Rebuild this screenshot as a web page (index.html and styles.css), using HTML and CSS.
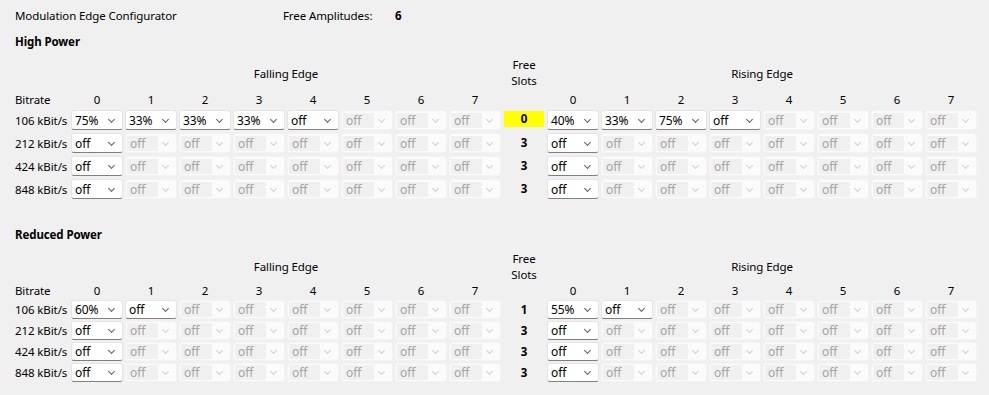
FILE: index.html
```html
<!DOCTYPE html>
<html>
<head>
<meta charset="utf-8">
<link rel="stylesheet" href="styles.css">
</head>
<body>
<div class="top">
  <div class="app-title">Modulation Edge Configurator</div>
  <div class="amp-label">Free Amplitudes:</div>
  <div class="amp-val">6</div>
</div>

<div class="sec-title first">High Power</div>
<div class="grid high">
  <div class="hdr-empty"></div>
  <div class="hdr-group fall">Falling Edge</div>
  <div class="hdr-free">Free<br>Slots</div>
  <div class="hdr-group rise">Rising Edge</div>

  <div class="col-hd">Bitrate</div>
  <div class="num">0</div><div class="num">1</div><div class="num">2</div><div class="num">3</div><div class="num">4</div><div class="num">5</div><div class="num">6</div><div class="num">7</div>
  <div></div>
  <div class="num">0</div><div class="num">1</div><div class="num">2</div><div class="num">3</div><div class="num">4</div><div class="num">5</div><div class="num">6</div><div class="num">7</div>

  <div class="lbl">106 kBit/s</div>
  <div class="cb"><span>75%</span><i></i></div><div class="cb"><span>33%</span><i></i></div><div class="cb"><span>33%</span><i></i></div><div class="cb"><span>33%</span><i></i></div><div class="cb"><span>off</span><i></i></div><div class="cb dis"><span>off</span><i></i></div><div class="cb dis"><span>off</span><i></i></div><div class="cb dis"><span>off</span><i></i></div>
  <div class="free"><span class="warn">0</span></div>
  <div class="cb"><span>40%</span><i></i></div><div class="cb"><span>33%</span><i></i></div><div class="cb"><span>75%</span><i></i></div><div class="cb"><span>off</span><i></i></div><div class="cb dis"><span>off</span><i></i></div><div class="cb dis"><span>off</span><i></i></div><div class="cb dis"><span>off</span><i></i></div><div class="cb dis"><span>off</span><i></i></div>

  <div class="lbl">212 kBit/s</div>
  <div class="cb"><span>off</span><i></i></div><div class="cb dis"><span>off</span><i></i></div><div class="cb dis"><span>off</span><i></i></div><div class="cb dis"><span>off</span><i></i></div><div class="cb dis"><span>off</span><i></i></div><div class="cb dis"><span>off</span><i></i></div><div class="cb dis"><span>off</span><i></i></div><div class="cb dis"><span>off</span><i></i></div>
  <div class="free"><span>3</span></div>
  <div class="cb"><span>off</span><i></i></div><div class="cb dis"><span>off</span><i></i></div><div class="cb dis"><span>off</span><i></i></div><div class="cb dis"><span>off</span><i></i></div><div class="cb dis"><span>off</span><i></i></div><div class="cb dis"><span>off</span><i></i></div><div class="cb dis"><span>off</span><i></i></div><div class="cb dis"><span>off</span><i></i></div>

  <div class="lbl">424 kBit/s</div>
  <div class="cb"><span>off</span><i></i></div><div class="cb dis"><span>off</span><i></i></div><div class="cb dis"><span>off</span><i></i></div><div class="cb dis"><span>off</span><i></i></div><div class="cb dis"><span>off</span><i></i></div><div class="cb dis"><span>off</span><i></i></div><div class="cb dis"><span>off</span><i></i></div><div class="cb dis"><span>off</span><i></i></div>
  <div class="free"><span>3</span></div>
  <div class="cb"><span>off</span><i></i></div><div class="cb dis"><span>off</span><i></i></div><div class="cb dis"><span>off</span><i></i></div><div class="cb dis"><span>off</span><i></i></div><div class="cb dis"><span>off</span><i></i></div><div class="cb dis"><span>off</span><i></i></div><div class="cb dis"><span>off</span><i></i></div><div class="cb dis"><span>off</span><i></i></div>

  <div class="lbl">848 kBit/s</div>
  <div class="cb"><span>off</span><i></i></div><div class="cb dis"><span>off</span><i></i></div><div class="cb dis"><span>off</span><i></i></div><div class="cb dis"><span>off</span><i></i></div><div class="cb dis"><span>off</span><i></i></div><div class="cb dis"><span>off</span><i></i></div><div class="cb dis"><span>off</span><i></i></div><div class="cb dis"><span>off</span><i></i></div>
  <div class="free"><span>3</span></div>
  <div class="cb"><span>off</span><i></i></div><div class="cb dis"><span>off</span><i></i></div><div class="cb dis"><span>off</span><i></i></div><div class="cb dis"><span>off</span><i></i></div><div class="cb dis"><span>off</span><i></i></div><div class="cb dis"><span>off</span><i></i></div><div class="cb dis"><span>off</span><i></i></div><div class="cb dis"><span>off</span><i></i></div>
</div>

<div class="sec-title second">Reduced Power</div>
<div class="grid reduced">
  <div class="hdr-empty"></div>
  <div class="hdr-group fall">Falling Edge</div>
  <div class="hdr-free">Free<br>Slots</div>
  <div class="hdr-group rise">Rising Edge</div>

  <div class="col-hd">Bitrate</div>
  <div class="num">0</div><div class="num">1</div><div class="num">2</div><div class="num">3</div><div class="num">4</div><div class="num">5</div><div class="num">6</div><div class="num">7</div>
  <div></div>
  <div class="num">0</div><div class="num">1</div><div class="num">2</div><div class="num">3</div><div class="num">4</div><div class="num">5</div><div class="num">6</div><div class="num">7</div>

  <div class="lbl">106 kBit/s</div>
  <div class="cb"><span>60%</span><i></i></div><div class="cb"><span>off</span><i></i></div><div class="cb dis"><span>off</span><i></i></div><div class="cb dis"><span>off</span><i></i></div><div class="cb dis"><span>off</span><i></i></div><div class="cb dis"><span>off</span><i></i></div><div class="cb dis"><span>off</span><i></i></div><div class="cb dis"><span>off</span><i></i></div>
  <div class="free"><span>1</span></div>
  <div class="cb"><span>55%</span><i></i></div><div class="cb"><span>off</span><i></i></div><div class="cb dis"><span>off</span><i></i></div><div class="cb dis"><span>off</span><i></i></div><div class="cb dis"><span>off</span><i></i></div><div class="cb dis"><span>off</span><i></i></div><div class="cb dis"><span>off</span><i></i></div><div class="cb dis"><span>off</span><i></i></div>

  <div class="lbl">212 kBit/s</div>
  <div class="cb"><span>off</span><i></i></div><div class="cb dis"><span>off</span><i></i></div><div class="cb dis"><span>off</span><i></i></div><div class="cb dis"><span>off</span><i></i></div><div class="cb dis"><span>off</span><i></i></div><div class="cb dis"><span>off</span><i></i></div><div class="cb dis"><span>off</span><i></i></div><div class="cb dis"><span>off</span><i></i></div>
  <div class="free"><span>3</span></div>
  <div class="cb"><span>off</span><i></i></div><div class="cb dis"><span>off</span><i></i></div><div class="cb dis"><span>off</span><i></i></div><div class="cb dis"><span>off</span><i></i></div><div class="cb dis"><span>off</span><i></i></div><div class="cb dis"><span>off</span><i></i></div><div class="cb dis"><span>off</span><i></i></div><div class="cb dis"><span>off</span><i></i></div>

  <div class="lbl">424 kBit/s</div>
  <div class="cb"><span>off</span><i></i></div><div class="cb dis"><span>off</span><i></i></div><div class="cb dis"><span>off</span><i></i></div><div class="cb dis"><span>off</span><i></i></div><div class="cb dis"><span>off</span><i></i></div><div class="cb dis"><span>off</span><i></i></div><div class="cb dis"><span>off</span><i></i></div><div class="cb dis"><span>off</span><i></i></div>
  <div class="free"><span>3</span></div>
  <div class="cb"><span>off</span><i></i></div><div class="cb dis"><span>off</span><i></i></div><div class="cb dis"><span>off</span><i></i></div><div class="cb dis"><span>off</span><i></i></div><div class="cb dis"><span>off</span><i></i></div><div class="cb dis"><span>off</span><i></i></div><div class="cb dis"><span>off</span><i></i></div><div class="cb dis"><span>off</span><i></i></div>

  <div class="lbl">848 kBit/s</div>
  <div class="cb"><span>off</span><i></i></div><div class="cb dis"><span>off</span><i></i></div><div class="cb dis"><span>off</span><i></i></div><div class="cb dis"><span>off</span><i></i></div><div class="cb dis"><span>off</span><i></i></div><div class="cb dis"><span>off</span><i></i></div><div class="cb dis"><span>off</span><i></i></div><div class="cb dis"><span>off</span><i></i></div>
  <div class="free"><span>3</span></div>
  <div class="cb"><span>off</span><i></i></div><div class="cb dis"><span>off</span><i></i></div><div class="cb dis"><span>off</span><i></i></div><div class="cb dis"><span>off</span><i></i></div><div class="cb dis"><span>off</span><i></i></div><div class="cb dis"><span>off</span><i></i></div><div class="cb dis"><span>off</span><i></i></div><div class="cb dis"><span>off</span><i></i></div>
</div>
</body>
</html>
```

FILE: styles.css
```css
html, body {
  margin: 0;
  padding: 0;
  background: #f0f0f0;
}
body {
  font-family: "Noto Sans", "Open Sans", sans-serif;
  font-size: 11.5px;
  letter-spacing: -0.1px;
  line-height: 16px;
  color: #000;
  width: 989px;
  height: 395px;
  overflow: hidden;
}
.top {
  display: flex;
  padding: 8px 0 0 15px;
  height: 16px;
}
.app-title { width: 268px; }
.amp-label { width: 112px; }
.amp-val { font-weight: bold; }

.sec-title {
  font-weight: bold;
  padding-left: 15px;
  height: 16px;
}
.sec-title.first { margin-top: 10px; }
.sec-title.second { margin-top: 28px; }

.grid {
  display: grid;
  grid-template-columns: 54px repeat(8, 52px) 42px repeat(8, 52px);
  column-gap: 2px;
  padding-left: 15px;
  margin-top: 7px;
}
.grid.high {
  grid-template-rows: 32px 15px repeat(4, 20px);
  row-gap: 3px;
}
.grid.reduced {
  grid-template-rows: 32px 14px repeat(4, 19px);
  row-gap: 2px;
}
.hdr-group {
  grid-column: span 8;
  text-align: center;
  align-self: center;
  padding-top: 1px;
}
.reduced .hdr-group { padding-top: 2px; }
.hdr-free {
  text-align: center;
  margin: 0 -6px;
}
.reduced .hdr-free { padding-top: 1px; }
.num, .col-hd {
  align-self: center;
  white-space: nowrap;
}
.num { text-align: center; }
.lbl {
  white-space: nowrap;
  align-self: center;
  padding-top: 1px;
}
.free {
  display: flex;
  align-items: flex-start;
  justify-content: center;
  font-weight: bold;
  line-height: 20px;
}
.reduced .free { line-height: 19px; }
.free .warn {
  display: block;
  width: 40px;
  height: 16px;
  margin-top: 1px;
  line-height: 16px;
  text-align: center;
  background: #ffff00;
}

.cb {
  box-sizing: border-box;
  display: flex;
  align-items: center;
  justify-content: space-between;
  background: #ffffff;
  border: 1px solid #e5e5e5;
  border-bottom-color: #857e7e;
  border-radius: 3px;
  padding: 0 8px 0 0;
  font-size: 12px;
}
.cb span {
  padding-left: 3px;
  white-space: nowrap;
  padding-top: 1px;
}
.cb i {
  display: block;
  width: 4px;
  height: 4px;
  border-right: 1px solid #5f5f5f;
  border-bottom: 1px solid #5f5f5f;
  transform: translateY(-1px) rotate(45deg);
}
.cb.dis {
  background: #fbfbfb;
  border-color: #f3f3f3;
}
.cb.dis span {
  margin-left: 1px;
  padding-left: 3px;
  padding-top: 0;
  width: 28px;
  height: 15px;
  line-height: 16px;
  background: #f0f0f0;
  color: #a3a3a3;
}
.cb.dis i {
  border-color: #d9cfbd;
}
```
